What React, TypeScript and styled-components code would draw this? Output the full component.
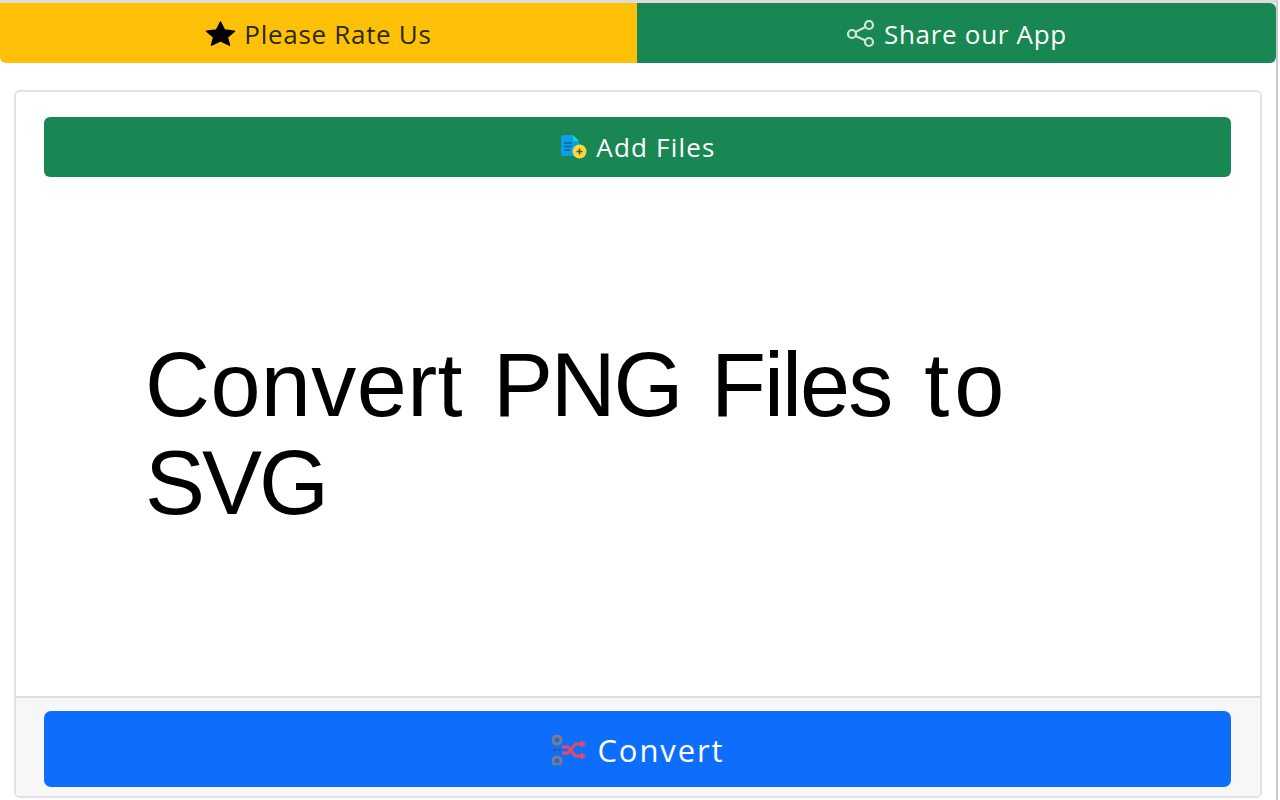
import React from "react";
import styled, { createGlobalStyle } from "styled-components";

const Global = createGlobalStyle`
  html, body { margin: 0; padding: 0; background: #fff; }
  body { font-family: "Open Sans", "Noto Sans", sans-serif; overflow: hidden; }
`;

const Frame = styled.div`
  width: 1280px;
  height: 800px;
  background: #fff;
`;

const Page = styled.div`
  width: 1278px;
  height: 800px;
  box-sizing: border-box;
  display: flex;
  flex-direction: column;
  border-top: 3px solid #dcdcdc;
  border-right: 2px solid #c8cbc8;
  overflow: hidden;
`;

const TopBar = styled.div`
  display: grid;
  grid-template-columns: 637px 1fr;
  height: 60px;
  flex: none;
`;

const TopButton = styled.button<{ $tone: "rate" | "share" }>`
  display: flex;
  align-items: center;
  justify-content: center;
  gap: 8px;
  border: 0;
  padding: 1px 0 0;
  font-family: inherit;
  font-size: 26px;
  letter-spacing: 0.7px;
  color: ${(p) => (p.$tone === "rate" ? "#2a2a00" : "#fff")};
  background: ${(p) => (p.$tone === "rate" ? "#ffc107" : "#198754")};
  border-radius: ${(p) => (p.$tone === "rate" ? "0 0 0 6px" : "0 6px 6px 0")};
`;

const Card = styled.section`
  margin: 27px 14px 2px 14px;
  flex: 1;
  display: flex;
  flex-direction: column;
  border: 2px solid #e2e2e2;
  border-radius: 6px;
  overflow: hidden;
`;

const CardBody = styled.div`
  flex: 1;
  padding: 25px 29px 0 28px;
  display: flex;
  flex-direction: column;
`;

const AddButton = styled.button`
  height: 60px;
  flex: none;
  display: flex;
  align-items: center;
  justify-content: center;
  gap: 9px;
  border: 0;
  padding: 0 0 0 2px;
  border-radius: 6px;
  background: #198754;
  color: #fff;
  font-family: inherit;
  font-size: 26px;
  letter-spacing: 1.2px;
`;

const Heading = styled.h1`
  margin: 159px 0 0 101px;
  font-family: "Liberation Sans", Arial, sans-serif;
  font-weight: 400;
  font-size: 90px;
  line-height: 98px;
  word-spacing: 5px;
  color: #000;
  width: 900px;
`;

const Word = styled.span<{ $track: number; $lead?: number }>`
  letter-spacing: ${(p) => p.$track}px;
  margin-left: ${(p) => p.$lead ?? 0}px;
`;

const CardFooter = styled.div`
  flex: none;
  height: 100px;
  box-sizing: border-box;
  padding: 13px 29px 9px 28px;
  background: #f7f7f7;
  border-top: 2px solid #dedede;
  display: flex;
`;

const ConvertButton = styled.button`
  flex: 1;
  display: flex;
  align-items: center;
  justify-content: center;
  gap: 11px;
  border: 0;
  padding: 1px 0 0 2px;
  border-radius: 7px;
  background: #0d6efd;
  color: #fff;
  font-family: inherit;
  font-size: 31px;
  letter-spacing: 1.9px;
`;

const Star = () => (
  <svg width="31" height="25" viewBox="0 0 31 25" fill="#000">
    <path
      d="M15.5 1l4 8 10 1.200-7.200 6 2.200 8-9-4.400-9 4.400 2.200-8-7.200-6 10-1.200z"
      stroke="#000"
      strokeWidth="1.500"
      strokeLinejoin="round"
    />
  </svg>
);

const Share = () => (
  <svg width="30" height="28" viewBox="0 0 30 28" fill="none" stroke="#cfe5da" strokeWidth="2.200">
    <circle cx="6" cy="14" r="4" />
    <circle cx="23" cy="5" r="4" />
    <circle cx="23" cy="22" r="4" />
    <path d="M9.500 12l10-5M9.500 16l10 4.500" />
  </svg>
);

const FileAdd = () => (
  <svg width="26" height="24" viewBox="0 0 26 24">
    <path d="M0 2a2 2 0 0 1 2-2h10l6 6v13a2 2 0 0 1-2 2H2a2 2 0 0 1-2-2z" fill="#0b9fe8" />
    <path d="M12 0l6 6h-6z" fill="#19d3c5" />
    <path d="M3 8h8M3 11.500h8M3 15h6" stroke="#0d5f9c" strokeWidth="1.600" />
    <circle cx="18.500" cy="16.500" r="7" fill="#f5d840" />
    <path d="M15.500 16.500h6M18.500 13.500v6" stroke="#5c5320" strokeWidth="1.500" />
  </svg>
);

const Scissors = () => (
  <svg width="34" height="30" viewBox="0 0 34 30" fill="none">
    <circle cx="5" cy="5" r="4" stroke="#857d72" strokeWidth="3" />
    <circle cx="5" cy="26" r="4" stroke="#857d72" strokeWidth="3" />
    <path d="M1 15h3M6 15h3" stroke="#3f5068" strokeWidth="2" />
    <path d="M10 12h5c4 0 5 9 10 9h6M10 18h5c4 0 5-9 10-9h6" stroke="#ee4860" strokeWidth="3" />
    <path d="M29 5l5 4-5 4zM29 17l5 4-5 4z" fill="#ee4860" />
  </svg>
);

export default function App() {
  return (
    <>
      <Global />
      <Frame>
        <Page>
          <TopBar>
            <TopButton $tone="rate">
              <Star />
              Please Rate Us
            </TopButton>
            <TopButton $tone="share">
              <Share />
              Share our App
            </TopButton>
          </TopBar>
          <Card>
            <CardBody>
              <AddButton>
                <FileAdd />
                Add Files
              </AddButton>
              <Heading>
                <Word $track={0.4}>Convert</Word> <Word $track={-2.3}>PNG</Word>{" "}
                <Word $track={-2}>Files</Word> <Word $track={5} $lead={3}>to</Word>{" "}
                <Word $track={-3}>SVG</Word>
              </Heading>
            </CardBody>
            <CardFooter>
              <ConvertButton>
                <Scissors />
                Convert
              </ConvertButton>
            </CardFooter>
          </Card>
        </Page>
      </Frame>
    </>
  );
}
